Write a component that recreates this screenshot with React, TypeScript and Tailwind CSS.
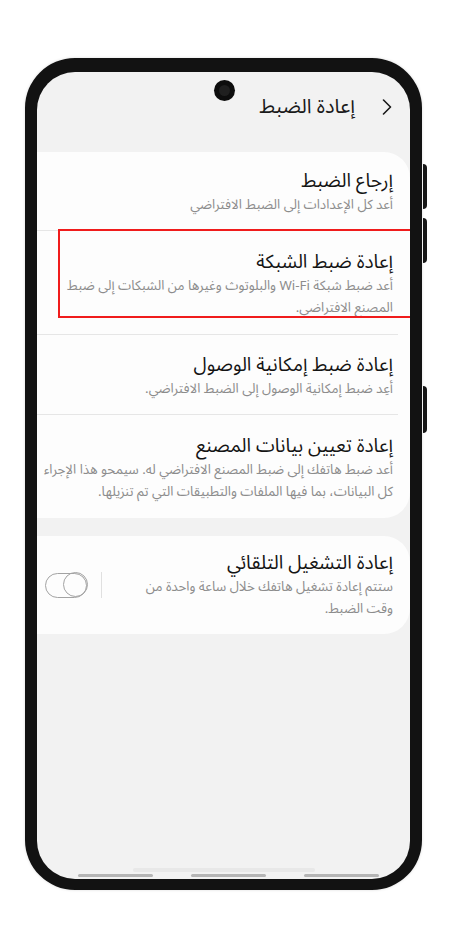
import React, { FC } from "react";

type Item = {
  title: string;
  lines: string[];
};

const items: Item[] = [
  {
    title: "إرجاع الضبط",
    lines: ["أعد كل الإعدادات إلى الضبط الافتراضي"],
  },
  {
    title: "إعادة ضبط الشبكة",
    lines: [
      "أعد ضبط شبكة Wi-Fi والبلوتوث وغيرها من الشبكات إلى ضبط",
      "المصنع الافتراضي.",
    ],
  },
  {
    title: "إعادة ضبط إمكانية الوصول",
    lines: ["أعِد ضبط إمكانية الوصول إلى الضبط الافتراضي."],
  },
  {
    title: "إعادة تعيين بيانات المصنع",
    lines: [
      "أعد ضبط هاتفك إلى ضبط المصنع الافتراضي له. سيمحو هذا الإجراء",
      "كل البيانات، بما فيها الملفات والتطبيقات التي تم تنزيلها.",
    ],
  },
];

const ItemText: FC<Item> = ({ title, lines }) => (
  <div className="flex flex-col">
    <div className="text-[19px] leading-[26px] text-[#141414] whitespace-nowrap">
      {title}
    </div>
    <div className="text-[13.3px] leading-[22px] text-[#8c8c8c] whitespace-nowrap">
      {lines.map((l, i) => (
        <div key={i}>{l}</div>
      ))}
    </div>
  </div>
);

const Toggle: FC = () => (
  <div className="relative w-[42px] h-[25px] rounded-full border-[1.5px] border-[#a3a3a3]">
    <div className="absolute right-[-1.5px] top-[-1.5px] w-[25px] h-[25px] rounded-full border-[1.5px] border-[#a3a3a3]" />
  </div>
);

export default function App() {
  return (
    <div className="w-[450px] h-[928px] bg-white font-['Noto_Sans_Arabic','DejaVu_Sans',sans-serif] pt-[58px] pl-[25px]">
      <div className="relative w-[397px] h-[832px]">
        {/* side keys */}
        <div className="absolute left-[398px] top-[106px] w-[4px] h-[45px] rounded-r-sm bg-[#161616]" />
        <div className="absolute left-[398px] top-[160px] w-[4px] h-[45px] rounded-r-sm bg-[#161616]" />
        <div className="absolute left-[398px] top-[328px] w-[4px] h-[47px] rounded-r-sm bg-[#161616]" />

        <div className="w-full h-full rounded-[50px] border-[12px] border-t-[14px] border-b-[11px] border-[#121212] bg-[#121212] shadow-[0_0_3px_rgba(0,0,0,0.15)]">
          <div
            dir="rtl"
            className="relative w-full h-full rounded-[38px] overflow-hidden bg-[#f2f2f2] flex flex-col"
          >
            {/* camera */}
            <div className="absolute left-[177px] top-[8px] w-[21px] h-[21px] rounded-full bg-[#0d0d0d] flex items-center justify-center">
              <div className="w-[11px] h-[11px] rounded-full bg-[#1f1f1f]" />
            </div>

            <div className="h-[80px] pb-[10px] pr-[18px] flex items-center gap-[27px]">
              <svg width="10" height="16" viewBox="0 0 10 16" fill="none">
                <path
                  d="M1.5 1 L8.5 8 L1.5 15"
                  stroke="#1a1a1a"
                  strokeWidth="1.6"
                  strokeLinecap="round"
                  strokeLinejoin="round"
                />
              </svg>
              <div className="text-[20px] leading-[28px] text-[#1a1a1a]">
                إعادة الضبط
              </div>
            </div>

            <div className="relative bg-[#fdfdfd] rounded-tr-[26px] rounded-br-[26px]">
              {items.map((it, i) => (
                <div key={i}>
                  {i > 0 && <div className="h-px bg-[#e6e6e6] mr-[12px]" />}
                  <div
                    className={
                      i === 0
                        ? "pr-[17px] pt-[16px] pb-[14px]"
                        : it.lines.length > 1
                          ? "pr-[17px] pt-[18px] pb-[15px]"
                          : "pr-[17px] pt-[17px] pb-[14px]"
                    }
                  >
                    <ItemText {...it} />
                  </div>
                </div>
              ))}
              {/* highlight annotation */}
              <div className="absolute left-[21px] -right-[4px] top-[77px] h-[89px] border-2 border-[#f01c1c]" />
            </div>

            <div className="mt-[18px] bg-[#fdfdfd] rounded-tr-[26px] rounded-br-[26px] flex items-center pr-[17px] pl-[8px] pt-[14px] pb-[14px]">
              <div className="flex-1">
                <ItemText
                  title="إعادة التشغيل التلقائي"
                  lines={[
                    "ستتم إعادة تشغيل هاتفك خلال ساعة واحدة من",
                    "وقت الضبط.",
                  ]}
                />
              </div>
              <div className="w-px h-[26px] bg-[#e0e0e0] ml-[14px]" />
              <Toggle />
            </div>

            <div className="mt-auto flex flex-col items-center pb-[2px]">
              <div className="w-[182px] h-[4px] rounded-full bg-[#e8e8e8] mb-[2px]" />
              <div className="flex gap-[38px] pl-[10px]">
                <div className="w-[75px] h-[3px] rounded-full bg-[#b5b5b5]" />
                <div className="w-[75px] h-[3px] rounded-full bg-[#b5b5b5]" />
                <div className="w-[75px] h-[3px] rounded-full bg-[#b5b5b5]" />
              </div>
            </div>
          </div>
        </div>
      </div>
    </div>
  );
}
